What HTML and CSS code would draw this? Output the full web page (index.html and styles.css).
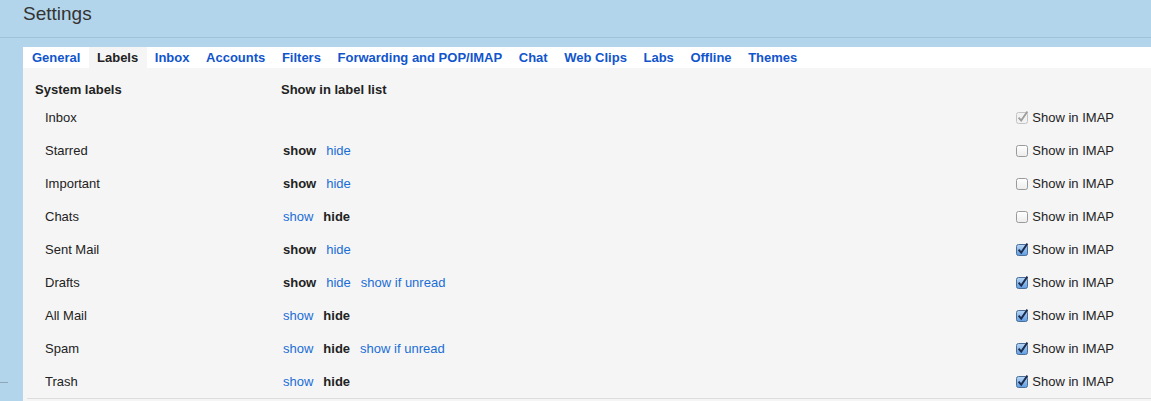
FILE: index.html
```html
<!DOCTYPE html>
<html>
<head>
<meta charset="utf-8">
<link rel="stylesheet" href="styles.css">
</head>
<body>
<div class="page">
  <header class="topbar">
    <h1 class="title">Settings</h1>
  </header>
  <div class="main">
    <div class="gutter"><div class="gutter-line"></div></div>
    <div class="panel">
      <nav class="tabs">
        <a class="tab">General</a>
        <a class="tab active">Labels</a>
        <a class="tab">Inbox</a>
        <a class="tab">Accounts</a>
        <a class="tab">Filters</a>
        <a class="tab">Forwarding and POP/IMAP</a>
        <a class="tab">Chat</a>
        <a class="tab">Web Clips</a>
        <a class="tab">Labs</a>
        <a class="tab">Offline</a>
        <a class="tab">Themes</a>
      </nav>
      <div class="content">
        <div class="grid">
          <div class="hcell">System labels</div>
          <div class="hcell hcell2">Show in label list</div>
          <div class="hcell"></div>

          <div class="cell name">Inbox</div>
          <div class="cell opts"></div>
          <div class="cell imap"><svg class="cb" width="12" height="14" viewBox="0 0 12 14"><rect x="0.5" y="2.5" width="11" height="11" rx="2" fill="#f2f2f2" stroke="#c4c4c4"/><path d="M2.6 7.6 L5.2 10.6 L11.4 1.6" fill="none" stroke="#9c9c9c" stroke-width="1.8"/></svg><span>Show in IMAP</span></div>

          <div class="cell name">Starred</div>
          <div class="cell opts"><b>show</b><a>hide</a></div>
          <div class="cell imap"><svg class="cb" width="12" height="14" viewBox="0 0 12 14"><defs><linearGradient id="u" x1="0" y1="0" x2="0" y2="1"><stop offset="0" stop-color="#ffffff"/><stop offset="1" stop-color="#ececec"/></linearGradient></defs><rect x="0.5" y="2.5" width="11" height="11" rx="2" fill="url(#u)" stroke="#9a9a9a"/></svg><span>Show in IMAP</span></div>

          <div class="cell name">Important</div>
          <div class="cell opts"><b>show</b><a>hide</a></div>
          <div class="cell imap"><svg class="cb" width="12" height="14" viewBox="0 0 12 14"><rect x="0.5" y="2.5" width="11" height="11" rx="2" fill="url(#u)" stroke="#9a9a9a"/></svg><span>Show in IMAP</span></div>

          <div class="cell name">Chats</div>
          <div class="cell opts"><a>show</a><b>hide</b></div>
          <div class="cell imap"><svg class="cb" width="12" height="14" viewBox="0 0 12 14"><rect x="0.5" y="2.5" width="11" height="11" rx="2" fill="url(#u)" stroke="#9a9a9a"/></svg><span>Show in IMAP</span></div>

          <div class="cell name">Sent Mail</div>
          <div class="cell opts"><b>show</b><a>hide</a></div>
          <div class="cell imap"><svg class="cb" width="12" height="14" viewBox="0 0 12 14"><defs><linearGradient id="c" x1="0" y1="0" x2="0" y2="1"><stop offset="0" stop-color="#b9d6f5"/><stop offset="1" stop-color="#5f9ce0"/></linearGradient></defs><rect x="0.5" y="2.5" width="11" height="11" rx="2" fill="url(#c)" stroke="#4a6e98"/><path d="M2.6 7.6 L5.2 10.6 L11.4 1.6" fill="none" stroke="#1c2c4e" stroke-width="1.9"/></svg><span>Show in IMAP</span></div>

          <div class="cell name">Drafts</div>
          <div class="cell opts"><b>show</b><a>hide</a><a>show if unread</a></div>
          <div class="cell imap"><svg class="cb" width="12" height="14" viewBox="0 0 12 14"><rect x="0.5" y="2.5" width="11" height="11" rx="2" fill="url(#c)" stroke="#4a6e98"/><path d="M2.6 7.6 L5.2 10.6 L11.4 1.6" fill="none" stroke="#1c2c4e" stroke-width="1.9"/></svg><span>Show in IMAP</span></div>

          <div class="cell name">All Mail</div>
          <div class="cell opts"><a>show</a><b>hide</b></div>
          <div class="cell imap"><svg class="cb" width="12" height="14" viewBox="0 0 12 14"><rect x="0.5" y="2.5" width="11" height="11" rx="2" fill="url(#c)" stroke="#4a6e98"/><path d="M2.6 7.6 L5.2 10.6 L11.4 1.6" fill="none" stroke="#1c2c4e" stroke-width="1.9"/></svg><span>Show in IMAP</span></div>

          <div class="cell name">Spam</div>
          <div class="cell opts"><a>show</a><b>hide</b><a>show if unread</a></div>
          <div class="cell imap"><svg class="cb" width="12" height="14" viewBox="0 0 12 14"><rect x="0.5" y="2.5" width="11" height="11" rx="2" fill="url(#c)" stroke="#4a6e98"/><path d="M2.6 7.6 L5.2 10.6 L11.4 1.6" fill="none" stroke="#1c2c4e" stroke-width="1.9"/></svg><span>Show in IMAP</span></div>

          <div class="cell name">Trash</div>
          <div class="cell opts"><a>show</a><b>hide</b></div>
          <div class="cell imap"><svg class="cb" width="12" height="14" viewBox="0 0 12 14"><rect x="0.5" y="2.5" width="11" height="11" rx="2" fill="url(#c)" stroke="#4a6e98"/><path d="M2.6 7.6 L5.2 10.6 L11.4 1.6" fill="none" stroke="#1c2c4e" stroke-width="1.9"/></svg><span>Show in IMAP</span></div>
        </div>
        <div class="bottom-line"></div>
      </div>
    </div>
  </div>
</div>
</body>
</html>
```
FILE: styles.css
```css
html, body {
  margin: 0;
  padding: 0;
  background: #b3d5eb;
  font-family: "Liberation Sans", Arial, sans-serif;
  font-size: 13px;
  color: #222;
  overflow: hidden;
}
.page {
  width: 1151px;
  height: 401px;
}
.topbar {
  height: 37px;
  border-bottom: 1px solid #9ec2da;
  box-sizing: content-box;
}
.title {
  margin: 0;
  padding: 2px 0 0 23px;
  font-size: 19px;
  font-weight: normal;
  color: #333;
  line-height: 24px;
}
.main {
  display: flex;
  margin-top: 9px;
}
.gutter {
  width: 23px;
  flex: none;
}
.gutter-line {
  width: 8px;
  height: 1px;
  background: #8fa6b8;
  margin-top: 335px;
}
.panel {
  flex: 1;
  background: #f5f5f5;
  min-height: 360px;
}
.tabs {
  display: flex;
  background: #fff;
  height: 21px;
  padding-left: 1px;
}
.tab {
  display: block;
  padding: 0 8.3px;
  line-height: 21px;
  font-weight: bold;
  color: #1155cc;
  white-space: nowrap;
}
.tab:first-child {
  padding-left: 8px;
}
.tab.active {
  background: #f5f5f5;
  color: #222;
}
.content {
  padding-top: 10px;
}
.grid {
  display: grid;
  grid-template-columns: 246px 1fr auto;
  padding-left: 12px;
  padding-right: 37px;
}
.hcell {
  height: 23px;
  line-height: 23px;
  font-weight: bold;
  color: #222;
}
.cell {
  height: 33px;
  display: flex;
  align-items: center;
}
.name {
  padding-left: 10px;
}
.opts {
  padding-left: 2px;
  gap: 10px;
}
.opts b {
  font-weight: bold;
  color: #222;
}
.opts a {
  color: #1a6dd6;
}
.imap {
  gap: 4px;
}
.imap .cb {
  display: block;
  margin-top: -2px;
}
.imap span {
  color: #222;
}
.bottom-line {
  height: 1px;
  background: #dcdcdc;
  margin-left: 4px;
}
```
